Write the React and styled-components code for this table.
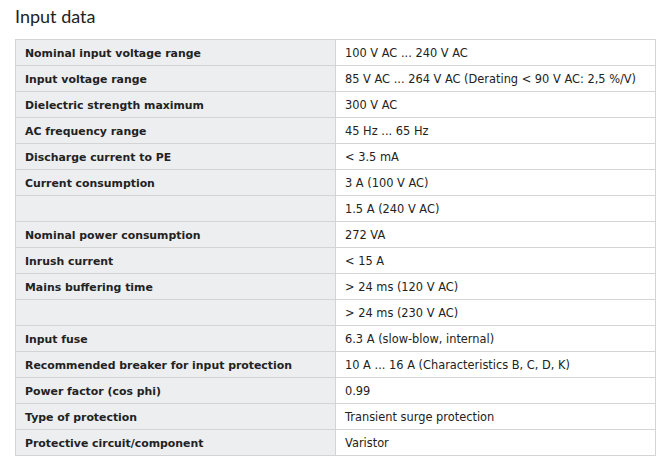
import React from 'react'
import styled, { createGlobalStyle } from 'styled-components'

const GlobalStyle = createGlobalStyle`
  html, body {
    margin: 0;
    background: #ffffff;
  }
`

const Page = styled.div`
  width: 672px;
  height: 473px;
  padding: 5px 16px 0 15px;
  box-sizing: border-box;
  background: #fff;
`

const Title = styled.h2`
  margin: 0 0 12px 0;
  font-family: "Lato", "Open Sans", sans-serif;
  font-weight: 400;
  font-size: 18px;
  line-height: 22px;
  color: #222;
`

const Table = styled.table`
  width: 641px;
  border-collapse: collapse;
  table-layout: fixed;
  font-family: "DejaVu Sans", Verdana, sans-serif;
  color: #222;
`

const Row = styled.tr`
  height: 26px;
`

const Cell = styled.td`
  border: 1px solid #d4d4d4;
  padding: 1px 9px 0 9px;
  height: 25px;
  box-sizing: border-box;
  white-space: nowrap;
  background: ${p => (p.$label ? '#eceef0' : '#ffffff')};
  font-weight: ${p => (p.$label ? 700 : 400)};
  font-size: ${p => (p.$label ? '10.9px' : '11.4px')};
`

const rows = [
  ['Nominal input voltage range', '100 V AC ... 240 V AC'],
  ['Input voltage range', '85 V AC ... 264 V AC (Derating < 90 V AC: 2,5 %/V)'],
  ['Dielectric strength maximum', '300 V AC'],
  ['AC frequency range', '45 Hz ... 65 Hz'],
  ['Discharge current to PE', '< 3.5 mA'],
  ['Current consumption', '3 A (100 V AC)'],
  ['', '1.5 A (240 V AC)'],
  ['Nominal power consumption', '272 VA'],
  ['Inrush current', '< 15 A'],
  ['Mains buffering time', '> 24 ms (120 V AC)'],
  ['', '> 24 ms (230 V AC)'],
  ['Input fuse', '6.3 A (slow-blow, internal)'],
  ['Recommended breaker for input protection', '10 A ... 16 A (Characteristics B, C, D, K)'],
  ['Power factor (cos phi)', '0.99'],
  ['Type of protection', 'Transient surge protection'],
  ['Protective circuit/component', 'Varistor']
]

export default function App () {
  return (
    <Page>
      <GlobalStyle />
      <Title>Input data</Title>
      <Table>
        <tbody>
          {rows.map(([label, value], i) => (
            <Row key={i}>
              <Cell $label>{label}</Cell>
              <Cell>{value}</Cell>
            </Row>
          ))}
        </tbody>
      </Table>
    </Page>
  )
}
